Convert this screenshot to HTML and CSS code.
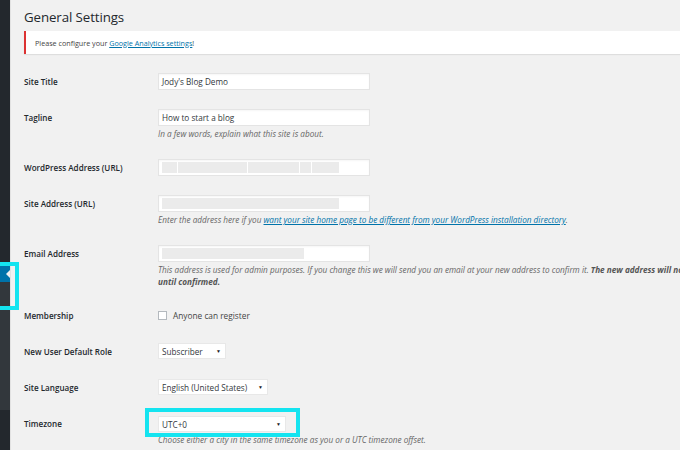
FILE: index.html
```html
<!DOCTYPE html>
<html lang="en">
<head>
<meta charset="utf-8">
<title>General Settings</title>
<link rel="stylesheet" href="styles.css">
</head>
<body>
<div class="screen">
  <nav class="sidebar">
    <div class="sb-top"></div>
    <div class="sb-current"><span class="notch"></span></div>
    <div class="sb-sub"></div>
    <div class="sb-rest"></div>
    <span class="highlight hl-menu"></span>
  </nav>
  <main class="content">
    <h1 class="title">General Settings</h1>
    <div class="notice"><span>Please configure your <a href="#" class="link">Google Analytics settings</a>!</span></div>
    <div class="form">
      <div class="row">
        <div class="label">Site Title</div>
        <div class="field"><div class="input">Jody's Blog Demo</div></div>
      </div>
      <div class="row">
        <div class="label">Tagline</div>
        <div class="field">
          <div class="input">How to start a blog</div>
          <p class="desc">In a few words, explain what this site is about.</p>
        </div>
      </div>
      <div class="row">
        <div class="label">WordPress Address (URL)</div>
        <div class="field">
          <div class="input"><span class="blur"><i class="seg s1"></i><i class="seg s2"></i><i class="seg s3"></i><i class="seg s4"></i><i class="seg s5"></i></span></div>
        </div>
      </div>
      <div class="row">
        <div class="label">Site Address (URL)</div>
        <div class="field">
          <div class="input"><span class="blur"><i class="seg site"></i></span></div>
          <p class="desc">Enter the address here if you <a href="#" class="link">want your site home page to be different from your WordPress installation directory</a>.</p>
        </div>
      </div>
      <div class="row">
        <div class="label">Email Address</div>
        <div class="field">
          <div class="input"><span class="blur"><i class="seg email"></i></span></div>
          <p class="desc nowrap">This address is used for admin purposes. If you change this we will send you an email at your new address to confirm it. <strong>The new address will not become active</strong><br><strong>until confirmed.</strong></p>
        </div>
      </div>
      <div class="row">
        <div class="label">Membership</div>
        <div class="field check-field"><span class="checkbox"></span><span>Anyone can register</span></div>
      </div>
      <div class="row">
        <div class="label">New User Default Role</div>
        <div class="field"><div class="select role"><span>Subscriber</span><span class="arrow">▼</span></div></div>
      </div>
      <div class="row">
        <div class="label">Site Language</div>
        <div class="field"><div class="select lang"><span>English (United States)</span><span class="arrow">▼</span></div></div>
      </div>
      <div class="row">
        <div class="label">Timezone</div>
        <div class="field">
          <div class="select tz"><span>UTC+0</span><span class="arrow">▼</span><span class="highlight hl-tz"></span></div>
          <p class="desc">Choose either a city in the same timezone as you or a UTC timezone offset.</p>
        </div>
      </div>
    </div>
  </main>
</div>
</body>
</html>
```
FILE: styles.css
```css
* { box-sizing: border-box; }
html, body { margin: 0; padding: 0; }
body {
  width: 680px;
  height: 450px;
  overflow: hidden;
  background: #f1f1f1;
  font-family: "Open Sans", "Noto Sans", sans-serif;
  color: #23282d;
  font-size: 8.2px;
}
.screen {
  display: flex;
  height: 450px;
  position: relative;
}
.sidebar {
  width: 11px;
  flex: none;
  display: flex;
  flex-direction: column;
  border-right: 1px solid #e2e2e2;
}
.sb-top { height: 266px; background: #23282d; }
.sb-current {
  height: 16px;
  background: #0073aa;
  position: relative;
}
.notch {
  position: absolute;
  right: 0;
  top: 4px;
  width: 0;
  height: 0;
  border-top: 4px solid transparent;
  border-bottom: 4px solid transparent;
  border-right: 4px solid #f1f1f1;
}
.sb-sub { height: 128px; background: #32373c; }
.sb-rest { flex: 1; background: #23282d; }
.highlight {
  position: absolute;
  border: 4px solid #14e4f0;
  pointer-events: none;
}
.hl-menu {
  left: -6px;
  top: 262px;
  width: 25px;
  height: 48px;
}
.content {
  flex: 1;
  padding-left: 13px;
  min-width: 0;
  overflow: hidden;
}
.title {
  margin: 7px 0 0;
  font-size: 13.3px;
  line-height: 20px;
  font-weight: 400;
  letter-spacing: -0.1px;
  color: #23282d;
}
.notice {
  margin-top: 4px;
  height: 23px;
  background: #fff;
  border-left: 2px solid #dc3232;
  box-shadow: 0 1px 1px rgba(0,0,0,0.08);
  padding-left: 9px;
  display: flex;
  align-items: center;
  font-size: 7.2px;
  color: #444;
}
.link { color: #0073aa; text-decoration: underline; }
.form { margin-top: 10px; }
.row {
  display: flex;
  padding: 9px 0 10px;
}
.label {
  width: 134px;
  flex: none;
  font-weight: 600;
  line-height: 17px;
  font-size: 8.1px;
  color: #23282d;
}
.field { flex: 1; min-width: 0; }
.input {
  width: 212px;
  height: 17px;
  background: #fff;
  border: 1px solid #e4e4e4;
  box-shadow: inset 0 1px 2px rgba(0,0,0,0.04);
  padding: 0 3px;
  display: flex;
  align-items: center;
  font-size: 8.2px;
  color: #32373c;
}
.blur { display: flex; height: 11px; width: 100%; }
.seg { display: block; height: 11px; background: #ebebeb; }
.s1 { width: 15px; }
.s2 { width: 69px; margin-left: 1px; }
.s3 { width: 51px; margin-left: 1px; }
.s4 { width: 11px; margin-left: 1px; }
.s5 { width: 27px; margin-left: 1px; }
.site { width: 177px; }
.email { width: 142px; }
.desc {
  margin: 2px 0 0;
  font-size: 8.2px;
  line-height: 12px;
  font-style: italic;
  color: #666;
}
.desc strong { color: #555; font-weight: 700; }
.nowrap { white-space: nowrap; }
.check-field {
  display: flex;
  align-items: center;
  height: 17px;
  gap: 6px;
  font-size: 8.3px;
  color: #444;
}
.checkbox {
  width: 9px;
  height: 9px;
  background: #fff;
  border: 1px solid #b4b9be;
  flex: none;
}
.select {
  position: relative;
  height: 16px;
  background: #fff;
  border: 1px solid #e8e8e8;
  display: flex;
  align-items: center;
  justify-content: space-between;
  padding: 0 4px 0 3px;
  font-size: 8.2px;
  color: #32373c;
}
.arrow { font-size: 5px; color: #222; }
.role { width: 68px; }
.lang { width: 110px; }
.tz { width: 128px; margin-top: 1px; }
.hl-tz {
  left: -14px;
  right: -15px;
  top: -9px;
  bottom: -6px;
}
```
